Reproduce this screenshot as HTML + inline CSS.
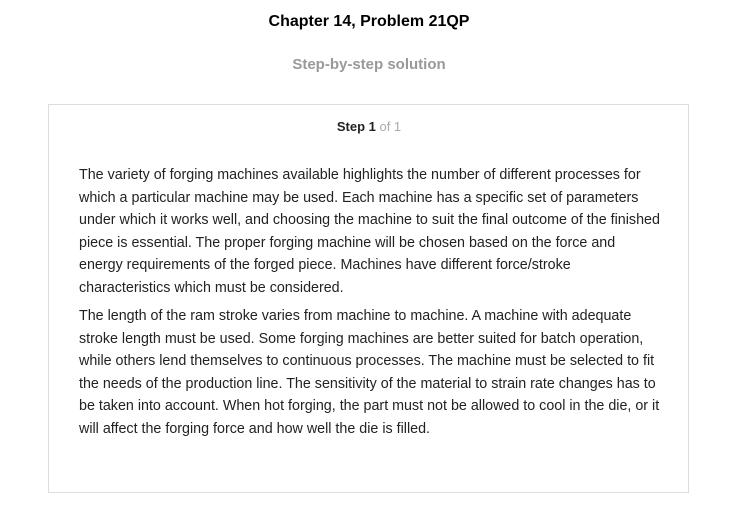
<!DOCTYPE html>
<html><head><meta charset="utf-8"><style>
body{margin:0;background:#fff;font-family:"Liberation Sans",Arial,sans-serif;width:738px;height:519px;overflow:hidden;position:relative}
.t{position:absolute;left:0;width:738px;text-align:center;font-weight:bold}
.box{position:absolute;left:48px;top:104px;width:639px;height:387px;border:1px solid #ddd}
.p{position:absolute;left:79px;font-size:14.3px;line-height:22.5px;color:#222;white-space:nowrap}
</style></head><body>
<div class="t" style="top:13px;font-size:16px;color:#000">Chapter 14, Problem 21QP</div>
<div class="t" style="top:56px;font-size:15px;color:#999">Step-by-step solution</div>
<div class="box"></div>
<div class="t" style="top:119px;font-size:13px;color:#222">Step 1 <span style="font-weight:normal;color:#aaa">of 1</span></div>
<div class="p" style="top:164px">The variety of forging machines available highlights the number of different processes for<br>which a particular machine may be used. Each machine has a specific set of parameters<br>under which it works well, and choosing the machine to suit the final outcome of the finished<br>piece is essential. The proper forging machine will be chosen based on the force and<br>energy requirements of the forged piece. Machines have different force/stroke<br>characteristics which must be considered.</div>
<div class="p" style="top:305px">The length of the ram stroke varies from machine to machine. A machine with adequate<br>stroke length must be used. Some forging machines are better suited for batch operation,<br>while others lend themselves to continuous processes. The machine must be selected to fit<br>the needs of the production line. The sensitivity of the material to strain rate changes has to<br>be taken into account. When hot forging, the part must not be allowed to cool in the die, or it<br>will affect the forging force and how well the die is filled.</div>
</body></html>
